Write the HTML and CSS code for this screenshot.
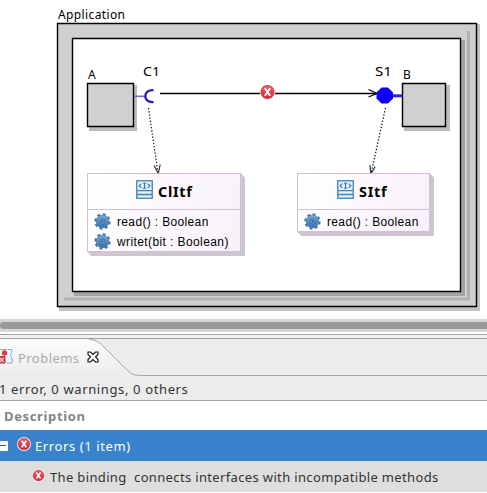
FILE: index.html
```
<!DOCTYPE html>
<html lang="en">
<head>
<meta charset="utf-8">
<title>Composite diagram</title>
<link rel="stylesheet" href="styles.css">
</head>
<body>
<svg class="defs" width="0" height="0" aria-hidden="true">
  <defs>
    <linearGradient id="red" x1="0" y1="0" x2="0" y2="1"><stop offset="0" stop-color="#f4606a"/><stop offset="1" stop-color="#cf2638"/></linearGradient>
    <linearGradient id="steel" x1="0" y1="0" x2="0" y2="1"><stop offset="0" stop-color="#78abd8"/><stop offset="1" stop-color="#3a70ab"/></linearGradient>
    <symbol id="error" viewBox="0 0 16 16">
      <circle cx="8" cy="8" r="8" fill="#fff"/><circle cx="8" cy="8" r="6.7" fill="url(#red)" stroke="#c93645" stroke-width=".8"/>
      <path d="M5.4 4.2 10.6 11.8M10.6 4.2 5.4 11.8" stroke="#fff" stroke-width="2"/>
    </symbol>
    <symbol id="interface" viewBox="0 0 17 19">
      <rect x=".75" y=".75" width="15.5" height="17.5" fill="#e1f1fb" stroke="#4583b9" stroke-width="1.3"/>
      <path d="M1 10.7h15M1 14.5h15" stroke="#4583b9" stroke-width="1.3"/>
      <path d="M5.4 3.6 3.1 5.7l2.3 2.1M11.6 3.6l2.3 2.1-2.3 2.1M7 3.2h3M7 8.2h3M8.5 3.2v5" fill="none" stroke="#37729f" stroke-width="1.1"/>
    </symbol>
    <symbol id="gear" viewBox="0 0 17 17">
      <circle cx="8.5" cy="8.5" r="7.2" fill="none" stroke="#4a79ab" stroke-width="2" stroke-dasharray="3 2.655"/>
      <circle cx="8.5" cy="8.5" r="6.300" fill="url(#steel)" stroke="#3a6ea5" stroke-width=".7"/>
      <circle cx="8.5" cy="8.5" r="2.6" fill="#79a5cf" stroke="#2f5f94" stroke-width=".8"/>
      <circle cx="8.5" cy="8.5" r="1" fill="#244f7c"/>
    </symbol>
  </defs>
</svg>
<main class="canvas">
  <svg class="wires" width="487" height="319" viewBox="0 0 487 319">
    <path class="frame-shadow" d="M59 24h421v287H59z"/>
    <path class="frame" d="M57.5 23.5h419v283h-419z"/>
    <path class="band" d="M64 297.500h406v3H64zM467 31h3v267h-3z"/>
    <path class="inner-shadow" d="M74 40h391v256H74z"/>
    <path class="inner" d="M72.5 38.5h388v253h-388z"/>
    <path class="shadow" d="M89 85h48v46H89zM404 85h46v46h-46z"/>
    <path class="frame" d="M87.5 83.5h46v43h-46zM402.5 83.5h43v43h-43z"/>
    <path d="M134.5 96.3h10" stroke="#6c6bd0" stroke-width="1.6"/>
    <path d="M153.500 90.200c-5.200-.2-8.200 2.200-8.200 6s3 6.200 8.200 5.800" fill="none" stroke="#251bb0" stroke-width="2.300"/>
    <path d="M160 93.500h216" stroke="#000" stroke-width="1.500"/>
    <path d="M368.500 89.500l8.500 4-8.500 3.500" fill="none" stroke="#000" stroke-width="1.200"/>
    <path d="M393 95.800h9" stroke="#3022e8" stroke-width="3"/>
    <path d="M381.500 87.500h6.500l5 5v6l-5 5h-6.500l-5-5v-6z" fill="#1000f5"/>
    <path class="dots" d="M148.500 108l9.500 65M385.500 108l-14.500 66"/>
    <path class="tip" d="M154 165.500l4.300 8 1.900-9M370 165l.8 9 4.400-7.500"/>
    <use href="#error" x="259.500" y="84" width="16" height="16"/>
    <text x="58" y="19" textLength="67">Application</text>
    <text x="88" y="79">A</text>
    <text x="143" y="76" textLength="17" lengthAdjust="spacingAndGlyphs">C1</text>
    <text x="375" y="76" textLength="17" lengthAdjust="spacingAndGlyphs">S1</text>
    <text x="403" y="79">B</text>
  </svg>
  <section class="node client">
    <h2><svg width="17" height="19"><use href="#interface"/></svg><span>ClItf</span></h2>
    <ul>
      <li><svg width="17" height="17"><use href="#gear"/></svg><span class="read">read() : Boolean</span></li>
      <li><svg width="17" height="17"><use href="#gear"/></svg><span class="write">writet(bit : Boolean)</span></li>
    </ul>
  </section>
  <section class="node server">
    <h2><svg width="17" height="19"><use href="#interface"/></svg><span>SItf</span></h2>
    <ul>
      <li><svg width="17" height="17"><use href="#gear"/></svg><span class="read">read() : Boolean</span></li>
    </ul>
  </section>
</main>
<div class="scrollbar"><div class="thumb"></div></div>
<section class="panel">
  <header class="tabs">
    <svg class="tab-shape" width="145" height="37" viewBox="0 0 145 37">
      <defs><linearGradient id="tab" x1="0" y1="0" x2="0" y2="1"><stop offset="0" stop-color="#fcfcfc"/><stop offset="1" stop-color="#ececec"/></linearGradient></defs>
      <path d="M0 0h89c8 1 11 4 16 9l18 18c6 6 9 9 18 9.500V37H0z" fill="url(#tab)"/>
      <path d="M89 .3c8 .7 11 3.700 16 8.700l18 18c6 6 9 9.500 18 9.500h4" fill="none" stroke="#a6a6a6"/>
    </svg>
    <svg class="problems" width="14" height="17" viewBox="0 0 14 17">
      <path d="M0 1.500h7M0 13.500h6" stroke="#b0a0a8"/>
      <path d="M8 1.500h3.500c2 2-2 4-.5 7s2 4 .5 6.500H7" fill="#f1f7fd" stroke="#7f9fca"/>
      <circle cx="4.500" cy="5" r="2.700" fill="#d84048"/>
      <path d="M-1 8.500h6v6.500h-6z" fill="#d84f56" stroke="#bd3641"/>
      <path d="M0 10l3.500 4M3.500 10L0 14" stroke="#fff"/>
    </svg>
    <span class="title">Problems</span>
    <svg class="close" width="12" height="12" viewBox="0 0 12 12"><path d="M1 1h2.500L6 3.500 8.500 1H11v2.500L8.500 6 11 8.500V11H8.500L6 8.500 3.500 11H1V8.500L3.500 6 1 3.500z" fill="#fff" stroke="#111" stroke-width="1.100"/></svg>
  </header>
  <p class="summary">1 error, 0 warnings, 0 others</p>
  <div class="heading">Description</div>
  <div class="row group"><i class="expander"></i><svg width="14" height="14"><use href="#error"/></svg><span>Errors (1 item)</span></div>
  <div class="row item"><svg width="13" height="13"><use href="#error"/></svg><span>The binding&nbsp; connects interfaces with incompatible methods</span></div>
</section>
</body>
</html>
```
FILE: styles.css
```
* { box-sizing: border-box; }
body { margin: 0; width: 487px; height: 493px; overflow: hidden; background: #fff; font: 13px/20px "Noto Sans", sans-serif; color: #333; }
svg { display: block; flex: none; }
.defs { position: absolute; }
.canvas { position: relative; height: 319px; }
.wires text { font: 12px "Noto Sans", sans-serif; fill: #000; }
.frame { fill: #d1d0d1; stroke: #000; stroke-width: 1.4; }
.inner { fill: #fff; stroke: #000; stroke-width: 1.4; }
.frame-shadow { fill: #c3c2c3; }
.shadow { fill: #bdbcbd; }
.inner-shadow { fill: #a6a4a6; }
.band { fill: #b1afb1; }
.dots { stroke: #222; stroke-width: 1.3; stroke-dasharray: 1.4 1.8; }
.tip { fill: none; stroke: #333; stroke-width: 1.2; }
.node { position: absolute; top: 173px; border: 1px solid #d3bfd3; background: linear-gradient(100deg, #fff, #f8f1fa); box-shadow: 1px 1px 0 #cdc5cf, 2px 2px 0 #cdc5cf, 3px 3px 0 #cdc5cf, 4px 4px 0 #cdc5cf; color: #000; }
.client { left: 87px; width: 154px; height: 79px; }
.server { left: 297px; width: 133px; height: 59px; }
.node h2 { display: flex; gap: 5px; height: 36px; margin: 0; padding: 6px 0 0 48px; border-bottom: 1px solid #d3bfd3; font: bold 14.5px/22px "Noto Sans", sans-serif; letter-spacing: 0.7px; }
.server h2 { padding-left: 39px; }
.node ul { margin: 0; padding: 3px 0 0 6px; list-style: none; }
.node li { display: flex; gap: 6px; height: 20px; font: 12px/18px "Liberation Sans", sans-serif; white-space: nowrap; }
.read { letter-spacing: 0.35px; }
.write { letter-spacing: 0.4px; }
.scrollbar { height: 13px; padding-top: 3px; background: #d5d5d6; }
.thumb { height: 7px; border-radius: 4px 0 0 4px; background: #9a9a9b; }
.panel { margin-top: 2px; padding-top: 3px; height: 158px; border-top: 1px solid #a2a2a2; background: linear-gradient(#f2f2f2 3px, #ececec 3px); overflow: hidden; }
.tabs { position: relative; display: flex; height: 38px; border-top: 1px solid #a2a2a2; border-bottom: 1px solid #a2a2a2; color: #aaa; }
.tab-shape { position: absolute; left: 0; top: 0; }
.problems { position: relative; margin-top: 9px; }
.title { position: relative; margin: 9px 0 0 4px; width: 62px; letter-spacing: 0.45px; }
.close { position: relative; margin: 12px 0 0 7px; }
.summary { height: 25px; margin: 0; text-indent: -1px; padding-top: 3px; border-bottom: 1px solid #a2a2a2; letter-spacing: 0.63px; }
.heading { height: 29px; padding: 5px 0 0 4px; background: #fff; color: #858585; font-weight: bold; letter-spacing: 0.65px; }
.row { display: flex; align-items: center; height: 31px; white-space: nowrap; }
.group { background: #3982cc; color: #fff; letter-spacing: 0.6px; }
.group svg { margin: -3px 0 0 9px; }
.group span { margin-left: 4px; }
.expander { width: 8px; height: 10px; background: linear-gradient(#555, #555) 0 4px / 6px 1px no-repeat #fff; border-radius: 0 1px 1px 0; }
.item { background: #dedede; letter-spacing: 0.35px; }
.item svg { margin: -3px 0 0 32px; }
.item span { margin-left: 5px; }
```
